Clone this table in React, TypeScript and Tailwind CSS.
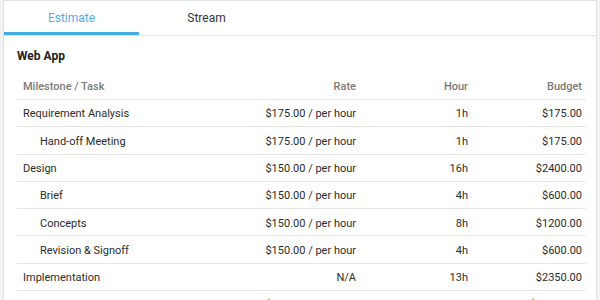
import React from "react";

type Row = { name: string; rate: string; hour: string; budget: string; sub?: boolean };

const rows: Row[] = [
  { name: "Requirement Analysis", rate: "$175.00 / per hour", hour: "1h", budget: "$175.00" },
  { name: "Hand-off Meeting", rate: "$175.00 / per hour", hour: "1h", budget: "$175.00", sub: true },
  { name: "Design", rate: "$150.00 / per hour", hour: "16h", budget: "$2400.00" },
  { name: "Brief", rate: "$150.00 / per hour", hour: "4h", budget: "$600.00", sub: true },
  { name: "Concepts", rate: "$150.00 / per hour", hour: "8h", budget: "$1200.00", sub: true },
  { name: "Revision & Signoff", rate: "$150.00 / per hour", hour: "4h", budget: "$600.00", sub: true },
  { name: "Implementation", rate: "N/A", hour: "13h", budget: "$2350.00" },
  { name: "Development", rate: "$150.00 / per hour", hour: "69h", budget: "$10350.00", sub: true },
];

export default function App() {
  return (
    <div
      className="w-[600px] h-[300px] overflow-hidden bg-[#f2f2f2] px-[3px]"
      style={{ fontFamily: "Roboto, 'Noto Sans', sans-serif" }}
    >
      <div className="bg-white border border-[#e3e3e3] flex h-[36px]">
        <div className="w-[135px] flex items-center justify-center text-[12px] text-[#52aee3] border-b-[3px] border-[#45abe3] pt-[3px]">
          Estimate
        </div>
        <div className="w-[135px] flex items-center justify-center text-[12px] text-[#333]">
          Stream
        </div>
      </div>
      <div className="bg-white border-x border-[#e3e3e3] pl-[13px] pr-[10px] h-[400px]">
        <div className="pt-[11px] h-[36px] text-[12px] font-bold text-[#222]">Web App</div>
        <div className="h-[27px] mt-[1px] pt-[2px] flex items-center text-[11px] font-medium text-[#7a7a7a] border-b border-[#e6e6e6]">
          <div className="flex-1 pl-[6px]">Milestone / Task</div>
          <div className="w-[200px] text-right">Rate</div>
          <div className="w-[112px] text-right">Hour</div>
          <div className="w-[118px] text-right pr-[4px]">Budget</div>
        </div>
        {rows.map((r, i) => (
          <div
            key={i}
            className="h-[27.3px] pt-[3px] flex items-center text-[11px] text-[#2b2b2b] border-b border-[#e6e6e6]"
          >
            <div className={r.sub ? "flex-1 pl-[23px]" : "flex-1 pl-[6px]"}>{r.name}</div>
            <div className="w-[200px] text-right">{r.rate}</div>
            <div className="w-[112px] text-right">{r.hour}</div>
            <div className="w-[118px] text-right pr-[4px]">{r.budget}</div>
          </div>
        ))}
      </div>
    </div>
  );
}
